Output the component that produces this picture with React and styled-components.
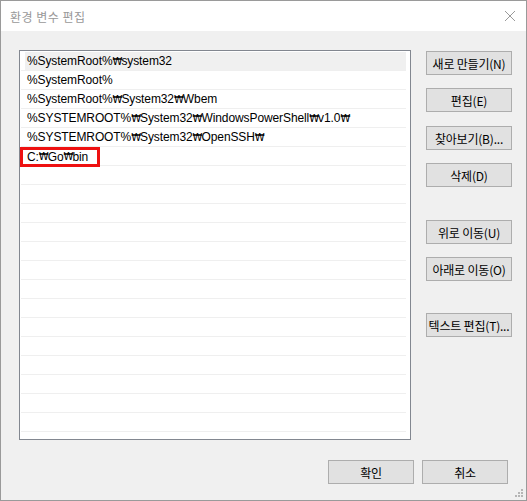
import React from "react";
import styled, { createGlobalStyle } from "styled-components";

const GlobalStyle = createGlobalStyle`
  html, body {
    margin: 0;
    padding: 0;
    background: #ffffff;
  }
  body {
    font-family: "Liberation Sans", "Noto Sans CJK KR", sans-serif;
    font-size: 12px;
    color: #000;
  }
`;

const Window = styled.div`
  position: relative;
  width: 527px;
  height: 501px;
  box-sizing: border-box;
  border: 1px solid #9a9a9a;
  display: flex;
  flex-direction: column;
  background: #f0f0f0;
`;

const TitleBar = styled.div`
  height: 30px;
  flex: none;
  background: #ffffff;
  display: flex;
  align-items: center;
  justify-content: space-between;
  padding: 0 10px 0 9px;
`;

const Title = styled.span`
  font-family: "Noto Sans CJK KR", sans-serif;
  font-size: 12px;
  color: #999999;
  letter-spacing: 0.5px;
`;

const Body = styled.div`
  flex: 1;
  display: flex;
  flex-direction: column;
  padding: 19px 14px 0 18px;
`;

const Main = styled.div`
  display: flex;
  gap: 15px;
`;

const List = styled.div`
  width: 392px;
  height: 390px;
  box-sizing: border-box;
  border: 1px solid #828790;
  background: #ffffff;
  padding-top: 1px;
  overflow: hidden;
`;

const Row = styled.div`
  height: 19px;
  box-sizing: border-box;
  margin: 0 4px 0 1px;
  border-bottom: 1px solid #efefef;
  display: flex;
`;

const Cell = styled.div`
  flex: 1;
  margin-left: 4px;
  padding-left: 2px;
  display: flex;
  align-items: center;
  white-space: nowrap;
  letter-spacing: -0.1px;
  background: ${(p) => (p.$selected ? "#f0f0f0" : "transparent")};
`;

const Won = styled.span`
  font-family: "DejaVu Sans", sans-serif;
  font-size: 10px;
  letter-spacing: -1.5px;
  margin-right: 0.5px;
`;

const Marked = styled.span`
  display: inline-flex;
  align-items: center;
  box-sizing: border-box;
  height: 20px;
  margin: 0 0 -1px -7px;
  padding: 0 9px 0 4px;
  border: 3px solid #ee1111;
`;

const ButtonColumn = styled.div`
  display: flex;
  flex-direction: column;
  width: 86px;
`;

const Button = styled.button`
  width: 86px;
  height: 24px;
  box-sizing: border-box;
  margin: 0;
  margin-top: ${(p) => p.$top || 0}px;
  padding: 0;
  border: 1px solid #adadad;
  background: #e1e1e1;
  font-family: "Noto Sans CJK KR", sans-serif;
  font-size: 12px;
  color: #000;
  white-space: nowrap;
  letter-spacing: -0.2px;
`;

const Footer = styled.div`
  display: flex;
  justify-content: flex-end;
  gap: 8px;
  margin-top: 20px;
  padding-right: 4px;
`;

const Grip = styled.svg`
  position: absolute;
  right: 2px;
  bottom: 2px;
`;

const items = [
  "%SystemRoot%₩system32",
  "%SystemRoot%",
  "%SystemRoot%₩System32₩Wbem",
  "%SYSTEMROOT%₩System32₩WindowsPowerShell₩v1.0₩",
  "%SYSTEMROOT%₩System32₩OpenSSH₩",
];

// split a path so each ₩ gets its own narrower glyph
function PathText({ text }) {
  const parts = text.split("₩");
  return parts.map((p, i) => (
    <React.Fragment key={i}>
      {p}
      {i < parts.length - 1 && <Won>₩</Won>}
    </React.Fragment>
  ));
}

const sideButtons = [
  { label: "새로 만들기(N)", top: 1 },
  { label: "편집(E)", top: 13 },
  { label: "찾아보기(B)...", top: 14 },
  { label: "삭제(D)", top: 13 },
  { label: "위로 이동(U)", top: 33 },
  { label: "아래로 이동(O)", top: 13 },
  { label: "텍스트 편집(T)...", top: 32 },
];

function App() {
  const blanks = Array.from({ length: 15 });
  return (
    <>
      <GlobalStyle />
      <Window>
        <TitleBar>
          <Title>환경 변수 편집</Title>
          <svg width="12" height="12" viewBox="0 0 12 12">
            <path d="M1 1 L11 11 M11 1 L1 11" stroke="#9a9a9a" strokeWidth="1" />
          </svg>
        </TitleBar>
        <Body>
          <Main>
            <List>
              {items.map((t, i) => (
                <Row key={t}>
                  <Cell $selected={i === 0}>
                    <PathText text={t} />
                  </Cell>
                </Row>
              ))}
              <Row>
                <Cell>
                  <Marked>
                    <PathText text="C:₩Go₩bin" />
                  </Marked>
                </Cell>
              </Row>
              {blanks.map((_, i) => (
                <Row key={"b" + i}>
                  <Cell />
                </Row>
              ))}
            </List>
            <ButtonColumn>
              {sideButtons.map((b) => (
                <Button key={b.label} $top={b.top}>
                  {b.label}
                </Button>
              ))}
            </ButtonColumn>
          </Main>
          <Footer>
            <Button>확인</Button>
            <Button>취소</Button>
          </Footer>
        </Body>
        <Grip width="9" height="9" viewBox="0 0 9 9">
          <rect x="6" y="0" width="2" height="2" fill="#b5b5b5" />
          <rect x="3" y="3" width="2" height="2" fill="#b5b5b5" />
          <rect x="6" y="3" width="2" height="2" fill="#b5b5b5" />
          <rect x="0" y="6" width="2" height="2" fill="#b5b5b5" />
          <rect x="3" y="6" width="2" height="2" fill="#b5b5b5" />
          <rect x="6" y="6" width="2" height="2" fill="#b5b5b5" />
        </Grip>
      </Window>
    </>
  );
}

export default App;
